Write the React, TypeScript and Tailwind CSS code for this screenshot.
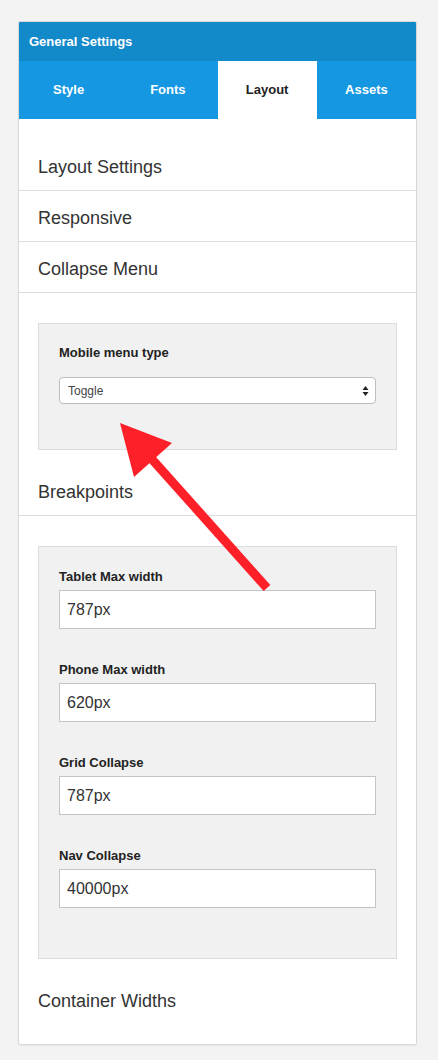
import React from "react";

const FONT = { fontFamily: '"Liberation Sans", Arial, sans-serif' };

const tabs = ["Style", "Fonts", "Layout", "Assets"];

const breakpoints = [
  { label: "Tablet Max width", value: "787px" },
  { label: "Phone Max width", value: "620px" },
  { label: "Grid Collapse", value: "787px" },
  { label: "Nav Collapse", value: "40000px" },
];

function Heading({ children }: { children: React.ReactNode }) {
  return (
    <div className="border-b border-[#dedede] px-[19px] pt-[16px] pb-[12px] text-[18px] leading-[22px] text-[#333]">
      {children}
    </div>
  );
}

export default function App() {
  return (
    <div className="relative min-h-[1060px] w-[438px] bg-[#f3f3f3] pt-[21px]" style={FONT}>
      <div className="ml-[18px] w-[399px] overflow-hidden rounded-[2px] border border-[#d9d9d9] bg-white shadow-[0_1px_2px_rgba(0,0,0,0.06)]">
        {/* header */}
        <div className="flex h-[39px] items-center bg-[#1289c9] px-[10px] text-[13px] font-bold text-white">
          General Settings
        </div>
        <div className="grid h-[58px] grid-cols-4 bg-[#1598e1]">
          {tabs.map((t) => (
            <div
              key={t}
              className={`flex items-center justify-center text-[13px] font-bold ${
                t === "Layout" ? "bg-white text-[#222]" : "text-white"
              }`}
            >
              {t}
            </div>
          ))}
        </div>

        {/* body */}
        <div className="pt-[21px]">
          <Heading>Layout Settings</Heading>
          <Heading>Responsive</Heading>
          <Heading>Collapse Menu</Heading>

          <div className="px-[19px] pt-[30px] pb-[15px]">
            <div className="h-[127px] border border-[#dcdcdc] bg-[#f1f1f1] px-[20px] pt-[20px]">
              <div className="text-[13px] font-bold leading-[18px] text-[#222]">Mobile menu type</div>
              <div className="mt-[15px] flex h-[27px] items-center justify-between rounded-[4px] border border-[#bdbdbd] bg-white pl-[8px] pr-[6px] text-[12px] text-[#444]">
                <span>Toggle</span>
                <svg width="7" height="12" viewBox="0 0 7 12">
                  <path d="M3.5 1 L6.5 5 L0.5 5 Z" fill="#222" />
                  <path d="M3.5 11 L6.5 7 L0.5 7 Z" fill="#222" />
                </svg>
              </div>
            </div>
          </div>

          <Heading>Breakpoints</Heading>

          <div className="px-[19px] pt-[30px]">
            <div className="border border-[#dcdcdc] bg-[#f1f1f1] px-[20px] pt-[21px] pb-[50px]">
              <div className="flex flex-col gap-[32px]">
                {breakpoints.map((b) => (
                  <div key={b.label}>
                    <div className="text-[13px] font-bold leading-[18px] text-[#222]">{b.label}</div>
                    <div className="mt-[4px] flex h-[39px] items-center border border-[#c4c4c4] bg-white px-[7px] text-[16px] text-[#333]">
                      {b.value}
                    </div>
                  </div>
                ))}
              </div>
            </div>
          </div>

          <div className="px-[19px] pt-[31px] pb-[32px] text-[18px] leading-[22px] text-[#333]">
            Container Widths
          </div>
        </div>
      </div>

      {/* annotation arrow */}
      <svg
        className="pointer-events-none absolute left-0 top-0"
        width="438"
        height="1060"
        viewBox="0 0 438 1060"
      >
        <line x1="267" y1="588" x2="150" y2="457" stroke="#fd2029" strokeWidth="9" />
        <polygon points="120,423 172,443 134,477" fill="#fd2029" />
      </svg>
    </div>
  );
}
